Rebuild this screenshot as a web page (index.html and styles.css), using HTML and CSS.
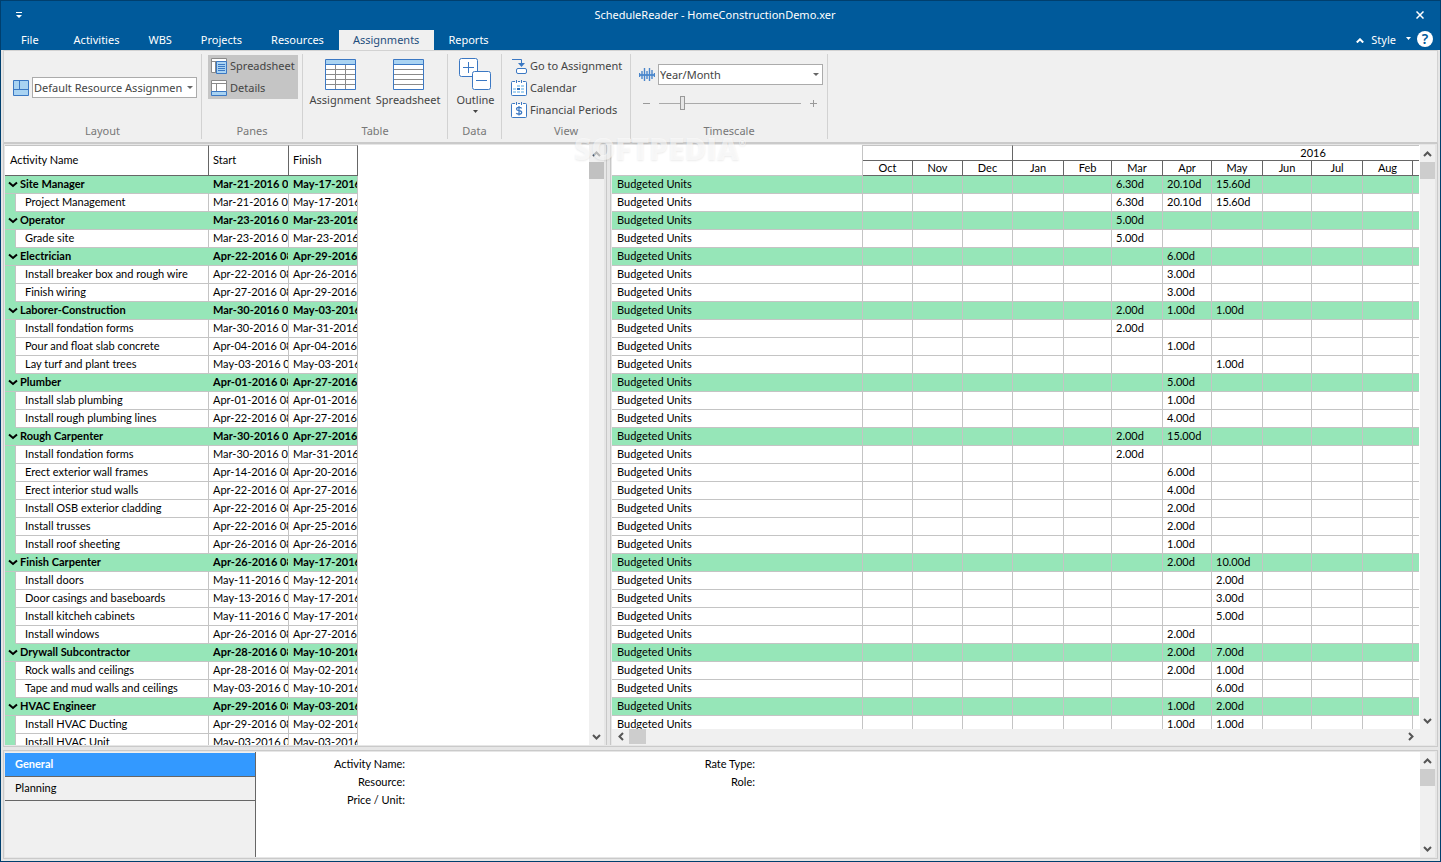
FILE: index.html
```html
<!DOCTYPE html>
<html lang="en">
<head>
  <meta charset="UTF-8">
  <title>ScheduleReader - HomeConstructionDemo.xer</title>
  <link rel="stylesheet" href="styles.css">
</head>
<body>

<svg class="defs" width="0" height="0">
  <symbol id="up" viewBox="0 0 9 6"><path d="M1 5L4.500 1.500L8 5" fill="none" stroke="#555" stroke-width="2"/></symbol>
  <symbol id="down" viewBox="0 0 9 6"><path d="M1 1L4.500 4.500L8 1" fill="none" stroke="#555" stroke-width="2"/></symbol>
  <symbol id="left" viewBox="0 0 6 9"><path d="M5 1L1.500 4.500L5 8" fill="none" stroke="#555" stroke-width="2"/></symbol>
  <symbol id="right" viewBox="0 0 6 9"><path d="M1 1L4.500 4.500L1 8" fill="none" stroke="#555" stroke-width="2"/></symbol>
</svg>

<header class="titlebar">
  <button class="quick" aria-label="Customize toolbar">
    <svg width="6" height="6"><path d="M0 0h6v1H0zM0 3h6L3 6z" fill="#fff"/></svg>
  </button>
  <h1>ScheduleReader - HomeConstructionDemo.xer</h1>
  <button class="close" aria-label="Close">
    <svg width="8" height="8"><path d="M.5 .5l7 7M7.500 .5l-7 7" stroke="#fff" stroke-width="1.500"/></svg>
  </button>
</header>

<nav class="tabs">
  <button class="tab file">File</button>
  <button class="tab">Activities</button>
  <button class="tab">WBS</button>
  <button class="tab">Projects</button>
  <button class="tab">Resources</button>
  <button class="tab active">Assignments</button>
  <button class="tab">Reports</button>
  <div class="tab-tools">
    <button class="style-btn">
      <svg width="8" height="5"><path d="M.8 4.500L4 1.300L7.200 4.500" fill="none" stroke="#fff" stroke-width="2"/></svg>
      Style
      <svg class="caret" width="5" height="8"><path d="M0 1h5L2.500 4z" fill="#fff"/></svg>
    </button>
    <button class="help" aria-label="Help">?</button>
  </div>
</nav>

<div class="ribbon">
  <section class="group layout">
    <div class="group-body">
      <svg width="16" height="16"><path d="M.5 .5h15v15H.5z" fill="#a9d3f2" stroke="#3b78c3"/><path d="M6.500 1v9M1 9.500h14" stroke="#3b78c3" stroke-width="1"/></svg>
      <select aria-label="Layout"><option>Default Resource Assignmen</option></select>
    </div>
    <h2>Layout</h2>
  </section>

  <section class="group panes">
    <div class="group-body">
      <button class="small pressed">
        <svg width="16" height="16"><path d="M.5 .5h15v14H.5z" fill="#fff" stroke="#8a8a8a"/><path d="M1 3.500h14M4.500 3v12" stroke="#8a8a8a"/><path d="M5.500 3.500h10v12h-10z" fill="#a9d3f2" stroke="#3b78c3"/><path d="M7 6.500h7M7 8.500h7M7 10.500h7M7 12.500h7" stroke="#3b78c3"/></svg>
        Spreadsheet
      </button>
      <button class="small pressed">
        <svg width="16" height="16"><path d="M.5 .5h15v11H.5z" fill="#fff" stroke="#8a8a8a"/><path d="M1 3.500h14M5.500 3v8" stroke="#8a8a8a"/><path d="M.5 11.500h15v4H.5z" fill="#a9d3f2" stroke="#3b78c3"/></svg>
        Details
      </button>
    </div>
    <h2>Panes</h2>
  </section>

  <section class="group table">
    <div class="group-body">
      <button class="big">
        <svg width="31" height="31"><path d="M.5 .5h30v30H.5z" fill="#fff" stroke="#3b78c3"/><path d="M1 1h29v4H1z" fill="#a9d3f2"/><path d="M1 10.500h29M1 15.500h29M1 20.500h29M1 25.500h29M10.500 6v24M20.500 6v24" stroke="#8a8a8a"/><path d="M0 5.500h31" stroke="#3b78c3"/></svg>
        Assignment
      </button>
      <button class="big">
        <svg width="31" height="31"><path d="M.5 .5h30v30H.5z" fill="#fff" stroke="#3b78c3"/><path d="M1 1h29v4H1z" fill="#a9d3f2"/><path d="M1 10.500h29M1 15.500h29M1 20.500h29M1 25.500h29" stroke="#8a8a8a"/><path d="M0 5.500h31" stroke="#3b78c3"/></svg>
        Spreadsheet
      </button>
    </div>
    <h2>Table</h2>
  </section>

  <section class="group data">
    <div class="group-body">
      <button class="big">
        <svg width="32" height="32"><rect x=".5" y=".5" width="18" height="18" rx="2" fill="#fff" stroke="#3b78c3"/><path d="M4 9.500h11M9.500 4v11" stroke="#3b78c3"/><rect x="13.500" y="13.500" width="18" height="18" rx="2" fill="#fff" stroke="#3b78c3"/><path d="M17 22.500h11" stroke="#3b78c3"/></svg>
        Outline
        <svg class="caret" width="5" height="3"><path d="M0 0h5L2.500 3z" fill="#444"/></svg>
      </button>
    </div>
    <h2>Data</h2>
  </section>

  <section class="group view">
    <div class="group-body">
      <button class="small">
        <svg width="16" height="16"><path d="M1 1.500h9.500V6" fill="none" stroke="#3b78c3"/><path d="M7 5h7l-3.500 4z" fill="#3b78c3"/><rect x="5.500" y="10.500" width="10" height="5" rx="1.500" fill="#fff" stroke="#3b78c3"/></svg>
        Go to Assignment
      </button>
      <button class="small">
        <svg width="16" height="16"><rect x=".5" y="1.500" width="15" height="14" rx="1" fill="#fff" stroke="#3b78c3"/><path d="M4 0h3v2H4zM9 0h3v2H9z" fill="#f0f0f0"/><path d="M5.500 0v3M10.500 0v3" stroke="#3b78c3"/><path d="M6 5h3v2H6zM10 5h3v2h-3zM2 8h3v2H2zM10 8h3v2h-3zM2 11h3v2H2zM6 11h3v2H6zM10 11h3v2h-3z" fill="#a9d3f2"/><path d="M6 8h3v2H6z" fill="#2f6fba"/></svg>
        Calendar
      </button>
      <button class="small">
        <svg width="16" height="16"><rect x=".5" y="1.500" width="15" height="14" rx="1" fill="#fff" stroke="#3b78c3"/><path d="M4 0h3v2H4zM9 0h3v2H9z" fill="#f0f0f0"/><path d="M5.500 0v3M10.500 0v3" stroke="#3b78c3"/><path d="M10.700 6.300Q10 5.300 8 5.300Q5.500 5.300 5.500 7Q5.500 8.300 8 8.700Q10.700 9 10.700 10.500Q10.700 12.200 8 12.200Q6 12.200 5.200 11.200M8 4v9.500" fill="none" stroke="#3b78c3" stroke-width="1.200"/></svg>
        Financial Periods
      </button>
    </div>
    <h2>View</h2>
  </section>

  <section class="group timescale">
    <div class="group-body">
      <div class="scale-row">
        <svg width="16" height="16"><path d="M0 8h16" stroke="#5b94d1" stroke-width="2"/><path d="M.5 6v4M3 4v8M5.500 1v13M8 4v8M10.500 1v13M13 3v9M15.500 6v4" stroke="#4a86cb" stroke-width="1.400"/></svg>
        <select aria-label="Timescale"><option>Year/Month</option></select>
      </div>
      <div class="zoom-row">
        <button aria-label="Zoom out"><svg width="7" height="7"><path d="M0 3.500h7" stroke="#999"/></svg></button>
        <input type="range" min="0" max="100" value="15" aria-label="Zoom">
        <button aria-label="Zoom in"><svg width="7" height="7"><path d="M0 3.500h7M3.500 0v7" stroke="#999"/></svg></button>
      </div>
    </div>
    <h2>Timescale</h2>
  </section>
  <div class="watermark">SOFTPEDIA<sup>®</sup></div>
</div>

<main class="workspace">
  <div class="pane activities">
    <div class="viewport">
      <table id="activityTable">
        <colgroup><col class="c-gutter"><col class="c-name"><col class="c-start"><col class="c-finish"></colgroup>
        <thead>
          <tr><th colspan="2">Activity Name</th><th>Start</th><th>Finish</th></tr>
        </thead>
        <tbody></tbody>
      </table>
    </div>
    <div class="vscroll">
      <button aria-label="Scroll up"><svg width="9" height="6"><use href="#up"/></svg></button>
      <div class="thumb"></div>
      <button class="end" aria-label="Scroll down"><svg width="9" height="6"><use href="#down"/></svg></button>
    </div>
  </div>

  <div class="splitter"></div>

  <div class="pane units">
    <div class="viewport">
      <table id="unitsTable">
        <colgroup id="unitCols"><col class="c-label"></colgroup>
        <thead>
          <tr class="years"><td rowspan="2" class="blank"></td><th colspan="3"></th><th colspan="12">2016</th></tr>
          <tr class="months" id="months"></tr>
        </thead>
        <tbody></tbody>
      </table>
    </div>
    <div class="vscroll">
      <button aria-label="Scroll up"><svg width="9" height="6"><use href="#up"/></svg></button>
      <div class="thumb"></div>
      <button class="end" aria-label="Scroll down"><svg width="9" height="6"><use href="#down"/></svg></button>
    </div>
    <div class="hscroll">
      <button aria-label="Scroll left"><svg width="6" height="9"><use href="#left"/></svg></button>
      <div class="thumb"></div>
      <button class="end" aria-label="Scroll right"><svg width="6" height="9"><use href="#right"/></svg></button>
    </div>
  </div>
</main>

<section class="details">
  <div class="detail-tabs">
    <button class="selected">General</button>
    <button>Planning</button>
  </div>
  <dl class="fields">
    <dt>Activity Name:</dt><dd></dd>
    <dt>Resource:</dt><dd></dd>
    <dt>Price / Unit:</dt><dd></dd>
  </dl>
  <dl class="fields second">
    <dt>Rate Type:</dt><dd></dd>
    <dt>Role:</dt><dd></dd>
  </dl>
  <div class="vscroll">
    <button aria-label="Scroll up"><svg width="9" height="6"><use href="#up"/></svg></button>
    <div class="thumb"></div>
    <button class="end" aria-label="Scroll down"><svg width="9" height="6"><use href="#down"/></svg></button>
  </div>
</section>

<script src="script.js"></script>
</body>
</html>
```
FILE: styles.css
```css
* {
  box-sizing: border-box;
}
body {
  margin: 0;
  height: 100vh;
  display: flex;
  flex-direction: column;
  overflow: hidden;
  border: 1px solid #003f6e;
  background: #e6e6e6;
  font: 11px/16px "Noto Sans", "Open Sans", sans-serif;
  color: #000;
}
h1, h2, dl, dd {
  margin: 0;
  font-size: 11px;
  font-weight: normal;
}
button, select, input {
  margin: 0;
  padding: 0;
  border: 0;
  background: none;
  font: inherit;
  color: inherit;
}
svg {
  display: block;
  flex: none;
}
.defs {
  position: absolute;
}

/* title bar */
.titlebar {
  display: flex;
  align-items: center;
  justify-content: space-between;
  height: 29px;
  flex: none;
  padding: 0 16px 2px 15px;
  background: #005a9b;
  color: #fff;
}
.titlebar h1 {
  margin-right: 8px;
}

/* menu tabs */
.tabs {
  display: flex;
  height: 20px;
  flex: none;
  background: #005a9b;
  color: #fff;
}
.tab {
  padding: 0 15px 0 14px;
}
.tab.file {
  padding: 0 21px 0 20px;
}
.tab.active {
  background: #f0f0f0;
  color: #1f4e7d;
}
.tab-tools {
  display: flex;
  align-items: center;
  margin-left: auto;
  padding-right: 7px;
}
.style-btn {
  display: flex;
  align-items: center;
  gap: 7px;
}
.style-btn .caret {
  margin: 0 6px 0 3px;
}
.help {
  width: 16px;
  height: 16px;
  margin-bottom: 3px;
  border-radius: 50%;
  background: #fff;
  color: #005a9b;
  font-size: 14px;
  font-weight: 600;
  line-height: 16px;
}

/* ribbon */
.ribbon {
  position: relative;
  display: flex;
  height: 94px;
  flex: none;
  margin: 0 2px;
  padding: 3px 0;
  border: 1px solid #d2d2d2;
  border-bottom: 2px solid #cacaca;
  background: #f0f0f0;
  color: #444;
}
.group {
  display: flex;
  flex-direction: column;
  border-right: 1px solid #d2d2d2;
}
.group-body {
  flex: 1;
}
.group h2 {
  color: #777;
  text-align: center;
}
.layout { width: 198px; }
.panes { width: 101px; }
.table { width: 145px; }
.data { width: 54px; }
.view { width: 129px; }
.timescale { width: 197px; }

select {
  appearance: none;
  width: 165px;
  height: 21px;
  padding: 0 12px 0 1px;
  border: 1px solid #ababab;
  background: #fff;
}
.layout .group-body,
.scale-row {
  position: relative;
  display: flex;
  align-items: center;
  gap: 3px;
}
.layout .group-body {
  padding: 0 0 2px 9px;
}
.layout .group-body::after,
.scale-row::after {
  content: "";
  position: absolute;
  right: 8px;
  border: 3px solid transparent;
  border-top-color: #666;
  border-bottom: 0;
}
.small {
  display: flex;
  align-items: center;
  gap: 3px;
  width: 100%;
  height: 22px;
  white-space: nowrap;
}
.panes .group-body {
  padding: 1px 4px 0 6px;
}
.small.pressed {
  padding-left: 3px;
  background: #c5c5c5;
}
.table .group-body,
.data .group-body {
  display: flex;
  justify-content: center;
  gap: 5px;
  padding-top: 5px;
}
.data .group-body {
  padding: 4px 0 0 2px;
}
.big {
  display: flex;
  flex-direction: column;
  align-items: center;
  gap: 2px;
}
.view .group-body {
  padding: 1px 0 0 9px;
}
.timescale .group-body {
  padding: 10px 4px 0 8px;
}
.timescale .scale-row::after {
  right: 4px;
}
.zoom-row {
  display: flex;
  align-items: center;
  gap: 9px;
  padding: 9px 0 0 4px;
}
input[type="range"] {
  appearance: none;
  width: 142px;
  height: 18px;
  background: linear-gradient(#aaa, #aaa) center / 100% 1px no-repeat;
}
input[type="range"]::-webkit-slider-thumb {
  appearance: none;
  width: 5px;
  height: 14px;
  border: 1px solid #999;
  background: #e6e6e6;
}
.watermark {
  position: absolute;
  left: 570px;
  top: 80px;
  z-index: 2;
  font: 800 30px/36px "Open Sans", sans-serif;
  color: rgba(255, 255, 255, 0.6);
  text-shadow: 0 1px 2px rgba(0, 0, 0, 0.08);
  pointer-events: none;
}
.watermark sup {
  font-size: 9px;
  line-height: 9px;
  vertical-align: 14px;
}

/* work area */
.workspace {
  display: flex;
  flex: 1;
  min-height: 0;
  margin: 0 2px;
  padding: 1px 0 1px 1px;
  border: 1px solid #cacaca;
  border-top: 0;
}
.pane {
  background: #fff;
  min-width: 0;
}
.activities {
  display: flex;
  flex: 0 0 599px;
}
.units {
  display: grid;
  grid-template-columns: minmax(0, 1fr) 16px;
  grid-template-rows: minmax(0, 1fr) 16px;
  flex: 1;
  margin-right: 2px;
}
.units .vscroll {
  justify-self: end;
}
.viewport {
  flex: 1;
  min-width: 0;
  overflow: hidden;
}
.splitter {
  width: 5px;
  flex: none;
  margin: 0 1px 0 2px;
  border: solid #c8c8c8;
  border-width: 0 1px;
  cursor: col-resize;
}

/* scroll bars */
.vscroll {
  display: flex;
  flex-direction: column;
  width: 15px;
  background: #f0f0f0;
  flex: none;
}
.vscroll button {
  height: 17px;
  display: grid;
  place-items: center;
}
.thumb {
  background: #cdcdcd;
}
.vscroll .thumb {
  height: 17px;
  width: 15px;
}
.activities .thumb {
  background: #c1c1c1;
}
.end {
  margin-top: auto;
}
.hscroll {
  grid-column: 1 / 3;
  display: flex;
  background: #f0f0f0;
  padding-right: 16px;
}
.hscroll button {
  width: 17px;
  height: 15px;
  display: grid;
  place-items: center;
}
.hscroll .thumb {
  width: 17px;
  height: 15px;
}
.hscroll .end {
  margin: 0 0 0 auto;
}

/* both spreadsheets */
table {
  table-layout: fixed;
  border-collapse: separate;
  border-spacing: 0;
  font-family: Lato, "Open Sans", sans-serif;
  font-size: 11px;
  line-height: 16px;
}
th, td {
  padding: 0 0 1px 4px;
  border-right: 1px solid #c4c4c4;
  border-bottom: 1px solid #c4c4c4;
  overflow: hidden;
  white-space: nowrap;
  text-align: left;
  font-weight: normal;
}
tbody tr {
  height: 18px;
}
.grp td {
  background: #96e6b8;
}
thead th {
  border-color: #666;
}

#activityTable {
  width: 353px;
}
.c-gutter { width: 11px; }
.c-name { width: 193px; }
.c-start { width: 80px; }
.c-finish { width: 69px; }
#activityTable thead th {
  height: 31px;
  border-top: 1px solid #c4c4c4;
}
#activityTable thead th:first-child {
  padding-left: 5px;
}
#activityTable .grp td {
  border-right-color: #96e6b8;
  font-weight: bold;
}
#activityTable .grp td:last-child {
  border-right-color: #c4c4c4;
}
#activityTable .grp .name {
  padding-left: 3px;
}
#activityTable .grp svg {
  display: inline-block;
  margin-right: 2px;
}
#activityTable .gutter {
  background: #96e6b8;
  border-bottom-color: #96e6b8;
}
#activityTable .name {
  padding-left: 9px;
}

#unitsTable {
  width: 1002px;
}
.c-label { width: 251px; }
.m48 { width: 48px; }
.m49 { width: 49px; }
.m50 { width: 50px; }
.m51 { width: 51px; }
#unitsTable thead th {
  padding: 0;
  text-align: center;
}
.years th {
  height: 16px;
  line-height: 14px;
  border-top: 1px solid #c4c4c4;
}
.months th {
  height: 15px;
  line-height: 14px;
}
#unitsTable tbody td:first-child {
  padding-left: 5px;
}

/* details panel */
.details {
  display: flex;
  flex: none;
  height: 109px;
  margin: 3px 2px 2px;
  padding: 1px 2px 1px 1px;
  border: 1px solid #cacaca;
  font-family: Lato, "Open Sans", sans-serif;
  font-size: 11px;
  line-height: 18px;
}
.detail-tabs {
  display: flex;
  flex-direction: column;
  width: 251px;
  flex: none;
  padding-top: 1px;
  border-right: 1px solid #666;
  background: #f0f0f0;
}
.detail-tabs button {
  height: 24px;
  padding: 0 0 2px 10px;
  border-bottom: 1px solid #666;
  text-align: left;
}
.detail-tabs .selected {
  background: #3399ff;
  color: #fff;
  font-weight: bold;
}
.fields {
  display: grid;
  grid-template-columns: 149px 1fr;
  align-content: start;
  width: 350px;
  padding-top: 3px;
  background: #fff;
  text-align: right;
}
.fields.second {
  flex: 1;
}
```
FILE: script.js
```js
// [name, start, finish, [Mar, Apr, May], group]
const rows = [
  ['Site Manager', 'Mar-21-2016', 'May-17-2016', ['6.30d', '20.10d', '15.60d'], true],
  ['Project Management', 'Mar-21-2016', 'May-17-2016', ['6.30d', '20.10d', '15.60d']],
  ['Operator', 'Mar-23-2016', 'Mar-23-2016', ['5.00d', '', ''], true],
  ['Grade site', 'Mar-23-2016', 'Mar-23-2016', ['5.00d', '', '']],
  ['Electrician', 'Apr-22-2016', 'Apr-29-2016', ['', '6.00d', ''], true],
  ['Install breaker box and rough wire', 'Apr-22-2016', 'Apr-26-2016', ['', '3.00d', '']],
  ['Finish wiring', 'Apr-27-2016', 'Apr-29-2016', ['', '3.00d', '']],
  ['Laborer-Construction', 'Mar-30-2016', 'May-03-2016', ['2.00d', '1.00d', '1.00d'], true],
  ['Install fondation forms', 'Mar-30-2016', 'Mar-31-2016', ['2.00d', '', '']],
  ['Pour and float slab concrete', 'Apr-04-2016', 'Apr-04-2016', ['', '1.00d', '']],
  ['Lay turf and plant trees', 'May-03-2016', 'May-03-2016', ['', '', '1.00d']],
  ['Plumber', 'Apr-01-2016', 'Apr-27-2016', ['', '5.00d', ''], true],
  ['Install slab plumbing', 'Apr-01-2016', 'Apr-01-2016', ['', '1.00d', '']],
  ['Install rough plumbing lines', 'Apr-22-2016', 'Apr-27-2016', ['', '4.00d', '']],
  ['Rough Carpenter', 'Mar-30-2016', 'Apr-27-2016', ['2.00d', '15.00d', ''], true],
  ['Install fondation forms', 'Mar-30-2016', 'Mar-31-2016', ['2.00d', '', '']],
  ['Erect exterior wall frames', 'Apr-14-2016', 'Apr-20-2016', ['', '6.00d', '']],
  ['Erect interior stud walls', 'Apr-22-2016', 'Apr-27-2016', ['', '4.00d', '']],
  ['Install OSB exterior cladding', 'Apr-22-2016', 'Apr-25-2016', ['', '2.00d', '']],
  ['Install trusses', 'Apr-22-2016', 'Apr-25-2016', ['', '2.00d', '']],
  ['Install roof sheeting', 'Apr-26-2016', 'Apr-26-2016', ['', '1.00d', '']],
  ['Finish Carpenter', 'Apr-26-2016', 'May-17-2016', ['', '2.00d', '10.00d'], true],
  ['Install doors', 'May-11-2016', 'May-12-2016', ['', '', '2.00d']],
  ['Door casings and baseboards', 'May-13-2016', 'May-17-2016', ['', '', '3.00d']],
  ['Install kitcheh cabinets', 'May-11-2016', 'May-17-2016', ['', '', '5.00d']],
  ['Install windows', 'Apr-26-2016', 'Apr-27-2016', ['', '2.00d', '']],
  ['Drywall Subcontractor', 'Apr-28-2016', 'May-10-2016', ['', '2.00d', '7.00d'], true],
  ['Rock walls and ceilings', 'Apr-28-2016', 'May-02-2016', ['', '2.00d', '1.00d']],
  ['Tape and mud walls and ceilings', 'May-03-2016', 'May-10-2016', ['', '', '6.00d']],
  ['HVAC Engineer', 'Apr-29-2016', 'May-03-2016', ['', '1.00d', '2.00d'], true],
  ['Install HVAC Ducting', 'Apr-29-2016', 'May-02-2016', ['', '1.00d', '1.00d']],
  ['Install HVAC Unit', 'May-03-2016', 'May-03-2016', ['', '', '1.00d']]
];

const months = [
  ['Oct', 50], ['Nov', 50], ['Dec', 50], ['Jan', 51], ['Feb', 48],
  ['Mar', 51], ['Apr', 49], ['May', 51], ['Jun', 49], ['Jul', 51],
  ['Aug', 50], ['Sep', 50], ['Oct', 51], ['Nov', 49], ['Dec', 51]
];

const chevron = '<svg width="10" height="7"><path d="M1 1.5L5 5L9 1.5" fill="none" stroke="#000" stroke-width="2"/></svg>';

document.getElementById('months').innerHTML = months.map(m => `<th>${m[0]}</th>`).join('');
document.getElementById('unitCols').innerHTML += months.map(m => `<col class="m${m[1]}">`).join('');

let left = '';
let right = '';
rows.forEach(([name, start, finish, units, group]) => {
  const cls = group ? ' class="grp"' : '';
  const nameCells = group
    ? `<td colspan="2" class="name">${chevron}${name}</td>`
    : `<td class="gutter"></td><td class="name">${name}</td>`;
  left += `<tr${cls}>${nameCells}<td>${start} 08</td><td>${finish}</td></tr>`;

  // Mar, Apr and May are months 5 to 7
  const cells = months.map((m, i) => `<td>${units[i - 5] || ''}</td>`).join('');
  right += `<tr${cls}><td>Budgeted Units</td>${cells}</tr>`;
});
document.querySelector('#activityTable tbody').innerHTML = left;
document.querySelector('#unitsTable tbody').innerHTML = right;
```
